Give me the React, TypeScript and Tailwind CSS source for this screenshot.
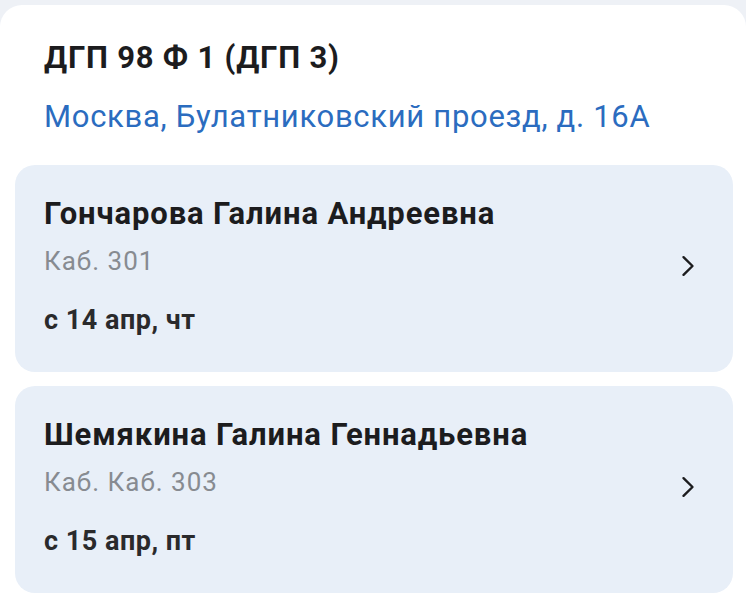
interface Doctor {
  name: string
  room: string
  date: string
}

const doctors: Doctor[] = [
  { name: "Гончарова Галина Андреевна", room: "Каб. 301", date: "с 14 апр, чт" },
  { name: "Шемякина Галина Геннадьевна", room: "Каб. Каб. 303", date: "с 15 апр, пт" },
]

function Chevron() {
  return (
    <svg width="14" height="22" viewBox="0 0 14 22" fill="none" className="shrink-0">
      <path d="M2.5 2.2 L11.5 11 L2.5 19.8" stroke="#1c1c1e" strokeWidth="2.4" strokeLinecap="round" strokeLinejoin="round" />
    </svg>
  )
}

function DoctorRow({ doctor }: { doctor: Doctor }) {
  return (
    <div className="flex items-center rounded-[20px] bg-[#e8eff8] pl-[29px] pr-[38px] pt-[31px] pb-[36px]">
      <div className="flex flex-1 flex-col">
        <div className="text-[31px] leading-[36px] font-bold tracking-[0.88px] text-[#1c1c1e]">{doctor.name}</div>
        <div className="mt-[13px] text-[26px] leading-[32px] tracking-[1px] text-[#878b91]">{doctor.room}</div>
        <div className="mt-[27px] text-[27px] leading-[32px] font-bold tracking-[0.5px] text-[#2a2a2c]">{doctor.date}</div>
      </div>
      <Chevron />
    </div>
  )
}

export default function App() {
  return (
    <div className="h-screen overflow-hidden bg-[#eef1f6] pt-[5px] font-['Roboto',sans-serif]">
      <div className="rounded-[22px] bg-white pl-[15px] pr-[13px] pb-[40px]">
        <div className="px-[29px] pt-[35px] pb-[30px]">
          <h2 className="text-[31px] leading-[36px] font-bold tracking-[0.8px] text-[#1c1c1e]">ДГП 98 Ф 1 (ДГП 3)</h2>
          <p className="mt-[23px] text-[31px] leading-[36px] tracking-[0.7px] text-[#2b6cbf]">
            Москва, Булатниковский проезд, д. 16А
          </p>
        </div>
        <div className="flex flex-col gap-[14px]">
          {doctors.map((d) => (
            <DoctorRow key={d.name} doctor={d} />
          ))}
        </div>
      </div>
    </div>
  )
}
